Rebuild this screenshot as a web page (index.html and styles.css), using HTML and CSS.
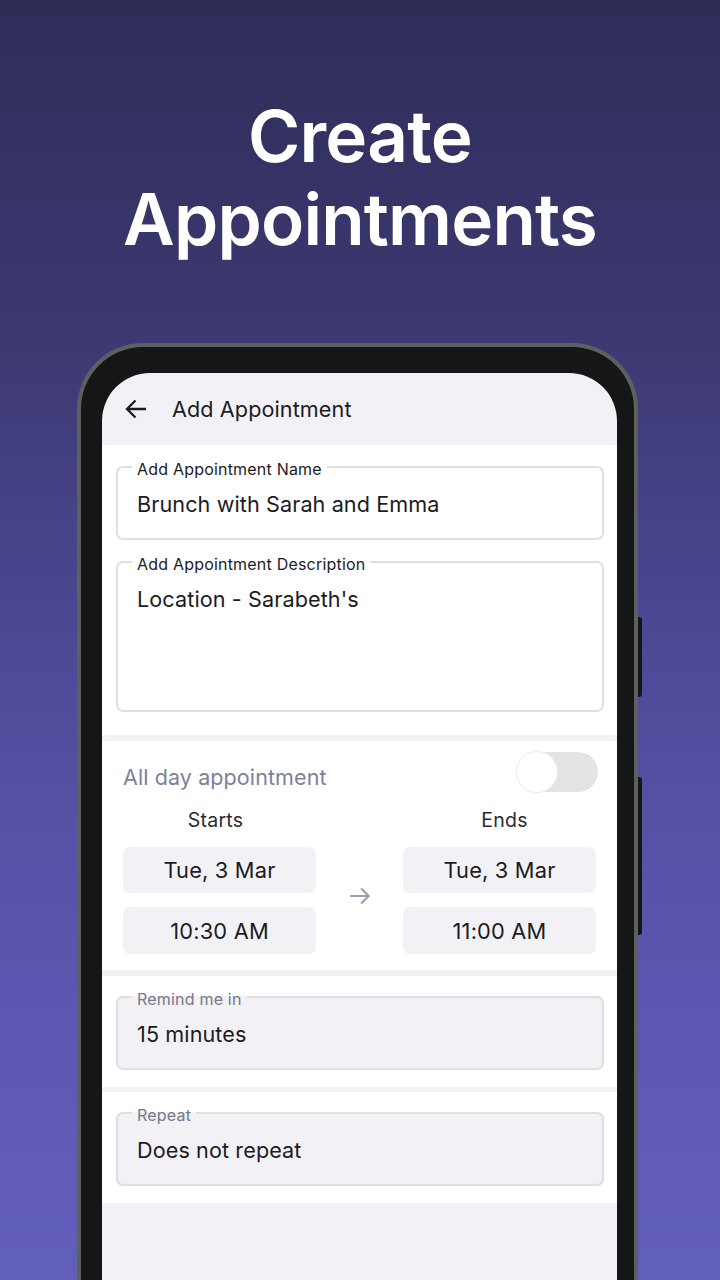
FILE: index.html
```html
<!DOCTYPE html>
<html lang="en">
<head>
<meta charset="utf-8">
<title>Create Appointments</title>
<link rel="stylesheet" href="styles.css">
</head>
<body>
<div class="stage">
  <h1 class="headline">Create<br>Appointments</h1>
  <div class="phone">
    <span class="side-btn vol"></span>
    <span class="side-btn power"></span>
    <div class="screen">
      <header class="appbar">
        <svg class="back" viewBox="0 0 22 22" width="22" height="22" aria-hidden="true">
          <path d="M21 11H2.5M10.5 2.5L2 11l8.5 8.5" fill="none" stroke="#1c1b1f" stroke-width="2.3"/>
        </svg>
        <span class="appbar-title">Add Appointment</span>
      </header>

      <section class="card">
        <fieldset class="field">
          <legend>Add Appointment Name</legend>
          <div class="value">Brunch with Sarah and Emma</div>
        </fieldset>
        <fieldset class="field tall">
          <legend>Add Appointment Description</legend>
          <div class="value">Location - Sarabeth's</div>
        </fieldset>
      </section>

      <section class="card times">
        <div class="allday">
          <span class="allday-label">All day appointment</span>
          <span class="toggle"><span class="thumb"></span></span>
        </div>
        <div class="range">
          <span class="col-label start">Starts</span>
          <span class="col-label end">Ends</span>
          <div class="pill d1">Tue, 3 Mar</div>
          <div class="pill t1">10:30 AM</div>
          <div class="arrow">
            <svg viewBox="0 0 24 24" width="26" height="26" aria-hidden="true">
              <path d="M3 12h17M13 5l7 7-7 7" fill="none" stroke="#9d9db0" stroke-width="2"/>
            </svg>
          </div>
          <div class="pill d2">Tue, 3 Mar</div>
          <div class="pill t2">11:00 AM</div>
        </div>
      </section>

      <section class="card single">
        <fieldset class="field filled">
          <legend>Remind me in</legend>
          <div class="value">15 minutes</div>
        </fieldset>
      </section>

      <section class="card single">
        <fieldset class="field filled">
          <legend>Repeat</legend>
          <div class="value">Does not repeat</div>
        </fieldset>
      </section>
    </div>
  </div>
</div>
</body>
</html>
```

FILE: styles.css
```css
* { box-sizing: border-box; }

html, body {
  margin: 0;
  padding: 0;
}

body {
  width: 720px;
  height: 1280px;
  overflow: hidden;
  font-family: Inter, "Noto Sans", "Liberation Sans", sans-serif;
  background: linear-gradient(180deg, #2e2c57 0%, #3d3a74 28%, #504c9c 55%, #5c58b1 78%, #625ebb 100%);
}

.stage {
  width: 720px;
  height: 1280px;
  display: flex;
  flex-direction: column;
}

.headline {
  margin: 0;
  padding-top: 95px;
  text-align: center;
  color: #ffffff;
  font-size: 71px;
  line-height: 83px;
  font-weight: 600;
  letter-spacing: -0.8px;
}

.phone {
  position: relative;
  margin-top: 82px;
  margin-left: 77px;
  width: 561px;
  flex: 1;
  background: #151716;
  border: 4px solid #5e6060;
  border-bottom: none;
  border-radius: 66px 66px 0 0;
  padding: 26px 17px 0 21px;
  display: flex;
}

.side-btn {
  position: absolute;
  right: -8px;
  width: 4px;
  background: #151716;
  border-radius: 0 3px 3px 0;
}
.side-btn.vol { top: 270px; height: 80px; }
.side-btn.power { top: 430px; height: 158px; }

.screen {
  flex: 1;
  background: #f2f2f6;
  border-radius: 48px 48px 0 0;
  overflow: hidden;
  display: flex;
  flex-direction: column;
}

.appbar {
  height: 72px;
  flex: none;
  display: flex;
  align-items: center;
  padding-left: 23px;
  gap: 25px;
}

.back { display: block; }

.appbar-title {
  font-size: 21.6px;
  color: #1c1b1f;
  letter-spacing: 0.1px;
}

.card {
  background: #ffffff;
  padding: 12px 13px 23px 14px;
  display: flex;
  flex-direction: column;
  gap: 12px;
  margin-bottom: 6px;
}

.card.single {
  padding: 11px 13px 17px 14px;
  margin-bottom: 5px;
}

.field {
  margin: 0;
  min-width: 0;
  border: 2px solid #dfdfe3;
  border-radius: 7px;
  padding: 14px 0 21px 19px;
}

.field legend {
  padding: 4px 5px 0;
  margin-left: -5px;
  font-size: 16px;
  line-height: 16px;
  color: #1c1b1f;
  letter-spacing: 0.2px;
}

.field .value {
  font-size: 21.6px;
  line-height: 26px;
  color: #1c1b1f;
  letter-spacing: 0.1px;
}

.field.tall .value { min-height: 103px; }

.field.filled {
  background: #f2f2f6;
}
.field.filled legend { color: #76778b; }

.times {
  padding: 11px 19px 16px 21px;
  gap: 0;
}

.allday {
  display: flex;
  justify-content: space-between;
  align-items: center;
  height: 40px;
}

.allday-label {
  font-size: 21.5px;
  color: #7d7f9d;
  letter-spacing: 0.1px;
  padding-top: 10px;
}

.toggle {
  position: relative;
  width: 81px;
  height: 40px;
  border-radius: 20px;
  background: #e4e4e7;
}

.thumb {
  position: absolute;
  left: 0;
  top: 0;
  width: 40px;
  height: 40px;
  border-radius: 50%;
  background: #ffffff;
  box-shadow: 0 0 0 1px #ebebee, 0 1px 2px rgba(0,0,0,0.05);
}

.range {
  margin-top: 16px;
  margin-right: 2px;
  display: grid;
  grid-template-columns: 193px 1fr 193px;
  grid-template-rows: 25px 46px 47px;
  row-gap: 14px;
}

.col-label {
  font-size: 19.5px;
  line-height: 24px;
  color: #2a2a2e;
  text-align: center;
  letter-spacing: 0.2px;
}
.col-label.start { grid-column: 1; grid-row: 1; padding-right: 8px; }
.col-label.end { grid-column: 3; grid-row: 1; padding-left: 10px; }

.pill {
  background: #f2f2f6;
  border-radius: 7px;
  display: flex;
  align-items: center;
  justify-content: center;
  font-size: 21.8px;
  color: #1c1b1f;
  letter-spacing: 0.2px;
}
.pill.d1 { grid-column: 1; grid-row: 2; }
.pill.t1 { grid-column: 1; grid-row: 3; }
.pill.d2 { grid-column: 3; grid-row: 2; }
.pill.t2 { grid-column: 3; grid-row: 3; }

.arrow {
  grid-column: 2;
  grid-row: 2 / span 2;
  display: flex;
  align-items: center;
  justify-content: center;
  padding-bottom: 10px;
}
.arrow svg { display: block; }
```
